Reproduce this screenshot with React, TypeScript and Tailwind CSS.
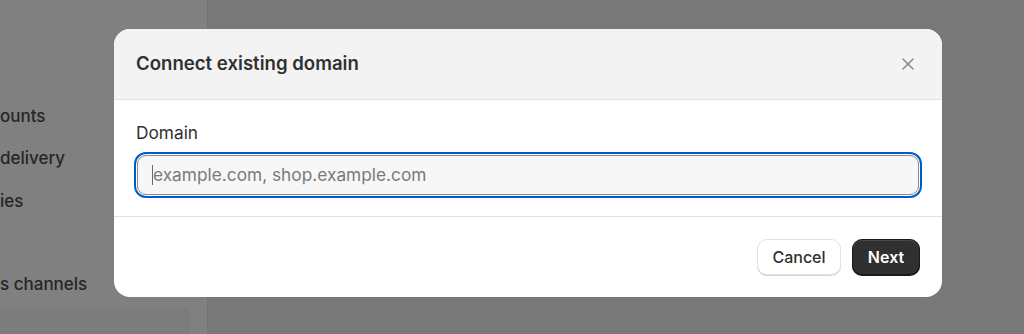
import React from 'react'
import { X } from 'lucide-react'

const font = { fontFamily: 'Inter, "Noto Sans", sans-serif' }

const SidebarItem: React.FC<{ label: string }> = ({ label }) => (
  <div className="h-[42.5px] flex items-center text-[17px] font-medium text-[#262626] whitespace-nowrap">{label}</div>
)

const App: React.FC = () => {
  return (
    <div className="relative w-[1024px] h-[334px] overflow-hidden flex bg-[#787878]" style={font}>
      {/* Sidebar (dimmed by overlay) */}
      <div className="w-[208px] h-full bg-[#808080] border-r border-[#747474] flex flex-col">
        <div className="pt-[95px]">
          <SidebarItem label="ounts" />
          <SidebarItem label="delivery" />
          <SidebarItem label="ies" />
        </div>
        <div className="h-[49px]" />
        <SidebarItem label="s channels" />
        <div className="mt-[3px] h-[30px] w-[190px] rounded-tr-lg bg-[#7c7c7c]" />
      </div>
      <div className="flex-1 h-full bg-[#787878]" />

      {/* Modal */}
      <div className="absolute left-[114px] top-[29px] w-[828px] h-[268px] bg-white rounded-[16px] overflow-hidden flex flex-col">
        <div className="h-[71px] bg-[#f3f3f3] border-b border-[#e3e3e3] flex items-center justify-between pl-[22px] pr-[24px]">
          <h2 className="text-[18.6px] font-semibold text-[#303030]">Connect existing domain</h2>
          <button className="text-[#8a8a8a]">
            <X className="w-[20px] h-[20px]" strokeWidth={1.8} />
          </button>
        </div>
        <div className="px-[22px] pt-[21px] pb-[20px] border-b border-[#e3e3e3]">
          <label className="block text-[17.3px] text-[#303030] leading-[23px] mb-[10px]">Domain</label>
          <div className="h-[42px] rounded-[10px] ring-2 ring-[#005bd3] p-[1px] bg-white">
            <div className="h-full rounded-[9px] border border-[#8a8a8a] bg-[#f7f7f7] flex items-center pl-[14px]">
              <span className="w-px h-[20px] bg-[#6a6a6a]" />
              <span className="text-[17.3px] text-[#7a7a7a]">example.com, shop.example.com</span>
            </div>
          </div>
        </div>
        <div className="flex-1 flex items-center justify-end gap-[11px] pr-[22px]">
          <button className="h-[36px] w-[84px] rounded-[10px] border border-[#e3e3e3] bg-white shadow-[0_1px_0_#d4d4d4] text-[16px] font-medium text-[#303030]">
            Cancel
          </button>
          <button className="h-[36px] w-[68px] rounded-[10px] bg-[#303030] border border-[#1a1a1a] shadow-[inset_0_1px_0_#4a4a4a,0_1px_0_#1a1a1a] text-[16px] font-semibold text-white">
            Next
          </button>
        </div>
      </div>
    </div>
  )
}

export default App
